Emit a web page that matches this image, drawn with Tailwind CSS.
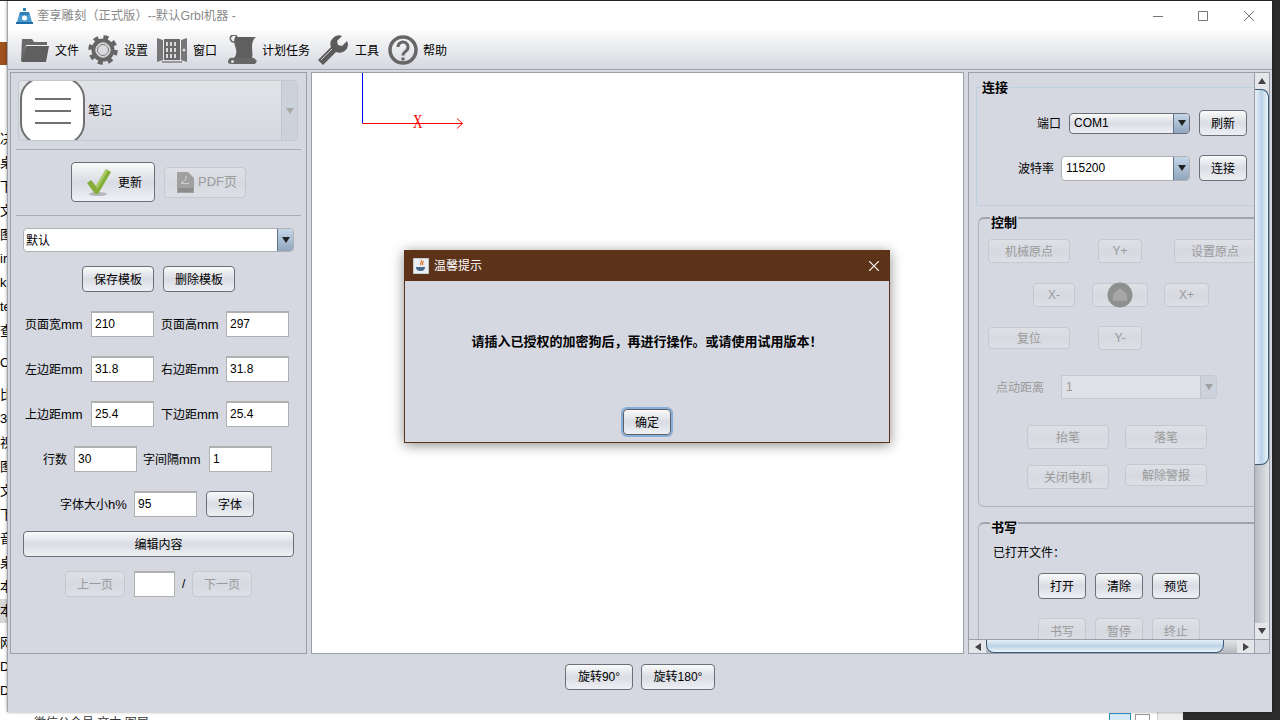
<!DOCTYPE html>
<html lang="zh-CN">
<head>
    <meta charset="UTF-8">
    <title>奎享雕刻</title>
    <script src="https://cdn.jsdelivr.net/npm/@tailwindcss/browser@4"></script>
</head>
<body class="relative w-[1280px] h-[720px] overflow-hidden bg-white text-[12px] leading-[14px] text-black font-['Liberation_Sans','Noto_Sans_CJK_SC',sans-serif]">

    <!-- desktop behind the window -->
    <div class="absolute left-0 top-0 w-[8px] h-[720px] overflow-hidden bg-white text-[13px] leading-[24px] whitespace-nowrap">
        <div class="h-[1px] bg-[#2b2b2b]"></div>
        <div class="h-[41px]"></div>
        <div class="h-[23px] bg-[#a0521e]"></div>
        <div class="h-[62px]"></div>
        <div>决</div><div>桌</div><div>下</div><div>文</div><div>图</div><div>ir</div><div>k</div><div>te</div><div>查</div>
        <div class="h-[8px]"></div>
        <div>Or</div>
        <div class="h-[8px]"></div>
        <div>比</div><div>3</div><div>视</div><div>图</div><div>文</div><div>下</div><div>音</div><div>桌</div><div>本</div>
        <div class="bg-[#d8d8d8]">本</div>
        <div class="h-[8px]"></div>
        <div>网</div><div>D</div><div>D</div>
    </div>
    <div class="absolute left-0 top-0 w-[1280px] h-[1px] bg-[#2b2b2b]"></div>
    <div class="absolute right-0 top-0 w-[8px] h-[720px] bg-[#2b2b2b]"></div>
    <div class="absolute left-0 bottom-0 w-[1280px] h-[8px] flex overflow-hidden">
        <div class="w-[1109px] pl-[34px] pt-[4px] text-[12px] text-[#333] bg-white">微信公众号 文本 图层</div>
        <div class="w-[22px] h-[8px] mt-[1px] border border-b-0 border-[#2f8fc4] bg-[#d6e9f5]"></div>
        <div class="w-[4px] bg-white"></div>
        <div class="w-[15px] h-[8px] mt-[2px] border border-b-0 border-[#999] bg-white"></div>
        <div class="w-[7px] bg-white"></div>
        <div class="w-[26px] bg-[#ededed] border-l border-[#ccc]"></div>
        <div class="flex-1 bg-[#2b2b2b]"></div>
    </div>

    <!-- main window -->
    <div class="absolute left-[7px] top-[1px] w-[1265px] h-[711px] flex flex-col bg-[#d5d8e0] border-l border-[#a0a4ac] shadow-[0_0_3px_rgba(0,0,0,0.4)]">

        <!-- title bar -->
        <div class="h-[30px] flex items-center bg-white">
            <svg class="ml-[8px] w-[17px] h-[18px]" viewBox="0 0 17 18">
                <path d="M7 1h3v3H7z M4 5h9l1 3H3z" fill="#2f7fb8"/>
                <path d="M1 15l2-7h11l2 7z" fill="#4a9ad0"/>
                <circle cx="8.500" cy="11" r="2.500" fill="#fff"/>
                <path d="M0 15h17v2H0z" fill="#1f6ea6"/>
            </svg>
            <span class="ml-[4px] text-[12.3px] text-[#8a8a8a]">奎享雕刻（正式版）--默认Grbl机器 -</span>
            <div class="ml-auto flex items-center">
                <svg class="w-[10px] h-[10px]" viewBox="0 0 10 10"><path d="M0 5.500h10" stroke="#777" stroke-width="1"/></svg>
                <svg class="ml-[35px] w-[10px] h-[10px]" viewBox="0 0 10 10"><path d="M.5.5h9v9h-9z" fill="none" stroke="#777" stroke-width="1"/></svg>
                <svg class="ml-[36px] mr-[18px] w-[10px] h-[10px]" viewBox="0 0 10 10"><path d="M0 0l10 10M10 0L0 10" stroke="#777" stroke-width="1"/></svg>
            </div>
        </div>

        <!-- toolbar -->
        <div class="h-[39px] flex items-center bg-linear-to-b from-[#fbfbfb] to-[#d5d8e0] border-b border-[#a0a4ac]">
            <svg class="ml-[12px] w-[30px] h-[30px]" viewBox="0 0 30 30">
                <path d="M2 4h10l2 3h13v3H6L3 26H1z" fill="#6a6a6a"/>
                <path d="M6 11h23l-3 16H1.500z" fill="#5f5f5f"/>
            </svg>
            <span class="ml-[5px] pt-[2px]">文件</span>

            <svg class="ml-[9px] w-[30px] h-[30px]" viewBox="0 0 30 30">
                <circle cx="15" cy="15" r="12.500" fill="none" stroke="#666" stroke-width="4.500" stroke-dasharray="4.900 4.920"/>
                <circle cx="15" cy="15" r="9.500" fill="none" stroke="#666" stroke-width="4"/>
                <circle cx="15" cy="15" r="7.200" fill="#eceef0" stroke="#bbb" stroke-width="1"/>
                <circle cx="15" cy="15" r="5.500" fill="#d9dbe0" stroke="#777" stroke-width="1"/>
            </svg>
            <span class="ml-[6px] pt-[2px]">设置</span>

            <svg class="ml-[9px] w-[30px] h-[30px]" viewBox="0 0 30 30">
                <path d="M0 3l6 2v20l-6 2z M30 3l-6 2v20l6 2z" fill="#777"/>
                <path d="M7 4h16v21H7z" fill="#6a6a6a"/>
                <path d="M9 7h2v4H9z M13 7h2v4h-2z M17 7h2v4h-2z M9 13h2v4H9z M13 13h2v4h-2z M17 13h2v4h-2z M9 19h2v4H9z M13 19h2v4h-2z M17 19h2v4h-2z" fill="#d8dade"/>
                <circle cx="27" cy="15" r="1.500" fill="#d8dade"/>
                <path d="M5 26h20v2H5z" fill="#999"/>
            </svg>
            <span class="ml-[6px] pt-[2px]">窗口</span>

            <svg class="ml-[10px] w-[30px] h-[30px]" viewBox="0 0 30 30">
                <path d="M8 2h21c-3 2-4 6-4 10s1 7 0 12H6c3-3 4-6 3-10S6 7 8 2z" fill="#5f5f5f"/>
                <path d="M7 7a3.500 3.500 0 1 1 3-5" fill="none" stroke="#666" stroke-width="1.500"/>
                <path d="M1 27c0-3 2-5 6-4h20l3 3-2 3H5c-3 0-4-1-4-2z" fill="#666"/>
                <circle cx="5.500" cy="26.500" r="1.500" fill="#ddd"/>
            </svg>
            <span class="ml-[5px] pt-[2px]">计划任务</span>

            <svg class="ml-[8px] w-[31px] h-[30px]" viewBox="0 0 31 30">
                <path d="M30 9a8.500 8.500 0 0 1-12 8L5 30l-5-5 13-13A8.500 8.500 0 0 1 24 1l-5 5 1 4 4 1 5-5z" fill="#5c5c5c"/>
                <path d="M3 25l11-11" stroke="#ccc" stroke-width="1"/>
            </svg>
            <span class="ml-[6px] pt-[2px]">工具</span>

            <svg class="ml-[9px] w-[30px] h-[30px]" viewBox="0 0 30 30">
                <circle cx="15" cy="15" r="13" fill="none" stroke="#666" stroke-width="3.500"/>
                <path d="M10 12a5 5 0 1 1 8 4c-2 1.500-3 2-3 4.500" fill="none" stroke="#666" stroke-width="3"/>
                <circle cx="15" cy="24" r="1.800" fill="#666"/>
            </svg>
            <span class="ml-[5px] pt-[2px]">帮助</span>
        </div>

        <!-- panels -->
        <div class="h-[584px] flex pt-[2px] pl-[2px] gap-[4px]">

            <!-- left panel -->
            <div class="w-[297px] border border-[#9a9ea6] pt-[7px]">
                <div class="ml-[7px] w-[280px] h-[61px] flex items-center rounded-[4px] border border-[#c4c8cf] bg-linear-to-b from-[#e2e3e7] to-[#d5d8e0] overflow-hidden">
                    <div class="ml-[1px] shrink-0 w-[65px] h-[68px] flex flex-col items-center justify-center gap-[10px] rounded-[22px] bg-white border-2 border-[#707070]">
                        <div class="w-[36px] h-[2px] bg-[#707070]"></div>
                        <div class="w-[36px] h-[2px] bg-[#707070]"></div>
                        <div class="w-[36px] h-[2px] bg-[#707070]"></div>
                    </div>
                    <span class="ml-[3px]">笔记</span>
                    <div class="ml-auto w-[16px] h-[61px] flex items-center justify-center border-l border-[#c0c4cc] bg-[#ccd2dc]">
                        <div class="border-x-[4px] border-x-transparent border-t-[6px] border-t-[#a8a8a8]"></div>
                    </div>
                </div>
                <div class="ml-[5px] mt-[8px] w-[285px] h-[1px] bg-[#a8acb4]"></div>

                <div class="mt-[12px] h-[40px] flex items-center">
                    <div class="ml-[60px] w-[84px] h-[40px] flex items-center rounded-[4px] border border-[#6b7078] bg-linear-to-b from-[#fafafa] via-[#d9dce3] to-[#eef0f4]">
                        <svg class="ml-[14px] w-[26px] h-[30px]" viewBox="0 0 26 30">
                            <ellipse cx="12" cy="27" rx="9" ry="2" fill="#b5b7bc"/>
                            <path d="M1 16l4-3 5 6L20 2l5 3-13 22h-3z" fill="#84ad3c"/>
                            <path d="M10 19L20 2l2 1.500L11 22z" fill="#a9cc62"/>
                        </svg>
                        <span class="ml-[6px] pt-[2px]">更新</span>
                    </div>
                    <div class="ml-[9px] w-[82px] h-[31px] flex items-center rounded-[4px] border border-[#c4c8cf] bg-linear-to-b from-[#dfe1e6] via-[#d6d9e0] to-[#dcdfe5] text-[#9a9a9a]">
                        <svg class="ml-[12px] w-[17px] h-[21px]" viewBox="0 0 17 21">
                            <path d="M0 0h11l6 6v15H0z" fill="#a0a0a0"/>
                            <path d="M4 11c3-1 6-4 5-7M4 11c3 1 6 1 8 0" fill="none" stroke="#d8dade" stroke-width="1"/>
                            <path d="M1 16h15v4H1z" fill="#8c8c8c"/>
                        </svg>
                        <span class="ml-[4px] text-[13px]">PDF页</span>
                    </div>
                </div>
                <div class="ml-[5px] mt-[13px] w-[285px] h-[1px] bg-[#a8acb4]"></div>

                <div class="ml-[12px] mt-[12px] w-[271px] h-[24px] flex items-center rounded-[4px] border border-[#b0b0b0] bg-white overflow-hidden">
                    <span class="ml-[2px] pt-[2px]">默认</span>
                    <div class="ml-auto w-[16px] h-[24px] flex items-center justify-center bg-linear-to-b from-[#c8d8ea] to-[#8ea4bc] border-l border-[#5d738c]">
                        <div class="border-x-[4px] border-x-transparent border-t-[6px] border-t-[#222]"></div>
                    </div>
                </div>

                <div class="mt-[14px] flex">
                    <div class="ml-[71px] w-[72px] h-[26px] pt-[2px] flex items-center justify-center rounded-[4px] border border-[#6b7078] bg-linear-to-b from-[#fafafa] via-[#d9dce3] to-[#eef0f4]">保存模板</div>
                    <div class="ml-[9px] w-[72px] h-[26px] pt-[2px] flex items-center justify-center rounded-[4px] border border-[#6b7078] bg-linear-to-b from-[#fafafa] via-[#d9dce3] to-[#eef0f4]">删除模板</div>
                </div>

                <div class="mt-[19px] h-[26px] flex items-center">
                    <span class="ml-[14px] w-[66px] pt-[2px]">页面宽<span class="text-[13px]">mm</span></span>
                    <div class="w-[63px] h-[26px] flex items-center pl-[3px] pb-[2px] bg-white border border-[#b0b0b0] border-t-2">210</div>
                    <span class="ml-[7px] w-[65px] pt-[2px]">页面高<span class="text-[13px]">mm</span></span>
                    <div class="w-[63px] h-[26px] flex items-center pl-[3px] pb-[2px] bg-white border border-[#b0b0b0] border-t-2">297</div>
                </div>
                <div class="mt-[19px] h-[26px] flex items-center">
                    <span class="ml-[14px] w-[66px] pt-[2px]">左边距<span class="text-[13px]">mm</span></span>
                    <div class="w-[63px] h-[26px] flex items-center pl-[3px] pb-[2px] bg-white border border-[#b0b0b0] border-t-2">31.8</div>
                    <span class="ml-[7px] w-[65px] pt-[2px]">右边距<span class="text-[13px]">mm</span></span>
                    <div class="w-[63px] h-[26px] flex items-center pl-[3px] pb-[2px] bg-white border border-[#b0b0b0] border-t-2">31.8</div>
                </div>
                <div class="mt-[19px] h-[26px] flex items-center">
                    <span class="ml-[14px] w-[66px] pt-[2px]">上边距<span class="text-[13px]">mm</span></span>
                    <div class="w-[63px] h-[26px] flex items-center pl-[3px] pb-[2px] bg-white border border-[#b0b0b0] border-t-2">25.4</div>
                    <span class="ml-[7px] w-[65px] pt-[2px]">下边距<span class="text-[13px]">mm</span></span>
                    <div class="w-[63px] h-[26px] flex items-center pl-[3px] pb-[2px] bg-white border border-[#b0b0b0] border-t-2">25.4</div>
                </div>
                <div class="mt-[19px] h-[26px] flex items-center">
                    <span class="ml-[32px] w-[31px] pt-[2px]">行数</span>
                    <div class="w-[63px] h-[26px] flex items-center pl-[3px] pb-[2px] bg-white border border-[#b0b0b0] border-t-2">30</div>
                    <span class="ml-[6px] w-[66px] pt-[2px]">字间隔<span class="text-[13px]">mm</span></span>
                    <div class="w-[63px] h-[26px] flex items-center pl-[3px] pb-[2px] bg-white border border-[#b0b0b0] border-t-2">1</div>
                </div>
                <div class="mt-[19px] h-[26px] flex items-center">
                    <span class="ml-[49px] w-[74px] pt-[2px]">字体大小<span class="text-[13px]">h%</span></span>
                    <div class="w-[63px] h-[26px] flex items-center pl-[3px] pb-[2px] bg-white border border-[#b0b0b0] border-t-2">95</div>
                    <div class="ml-[9px] w-[48px] h-[26px] pt-[2px] flex items-center justify-center rounded-[4px] border border-[#6b7078] bg-linear-to-b from-[#fafafa] via-[#d9dce3] to-[#eef0f4]">字体</div>
                </div>

                <div class="ml-[12px] mt-[14px] w-[271px] h-[26px] pt-[2px] flex items-center justify-center rounded-[4px] border border-[#6b7078] bg-linear-to-b from-[#fafafa] via-[#d9dce3] to-[#eef0f4]">编辑内容</div>

                <div class="mt-[14px] h-[26px] flex items-center">
                    <div class="ml-[54px] w-[60px] h-[26px] pt-[2px] flex items-center justify-center rounded-[4px] border border-[#c4c8cf] bg-linear-to-b from-[#dfe1e6] via-[#d6d9e0] to-[#dcdfe5] text-[#9a9a9a]">上一页</div>
                    <div class="ml-[9px] w-[41px] h-[26px] bg-white border border-[#b0b0b0] border-t-2"></div>
                    <span class="ml-[7px] w-[10px]">/</span>
                    <div class="w-[60px] h-[26px] pt-[2px] flex items-center justify-center rounded-[4px] border border-[#c4c8cf] bg-linear-to-b from-[#dfe1e6] via-[#d6d9e0] to-[#dcdfe5] text-[#9a9a9a]">下一页</div>
                </div>
            </div>

            <!-- canvas -->
            <div class="w-[653px] border border-[#9a9ea6] bg-white">
                <svg class="w-[651px] h-[580px]" viewBox="0 0 651 580">
                    <path d="M50.500 0v50.500" stroke="#0000ff" stroke-width="1" fill="none"/>
                    <path d="M50.500 50.500h100" stroke="#ff0000" stroke-width="1" fill="none"/>
                    <path d="M145 45.500l5.500 5-5.500 5" stroke="#ff0000" stroke-width="1" fill="none"/>
                    <text x="101" y="55" fill="#ff0000" font-size="19" textLength="9.500" lengthAdjust="spacingAndGlyphs" font-family="Liberation Serif, serif">X</text>
                </svg>
            </div>

            <!-- right panel -->
            <div class="w-[302px] border border-[#9a9ea6] flex flex-col">
                <div class="h-[566px] flex">
                    <div class="w-[285px] h-[566px] overflow-hidden">

                        <!-- 连接 -->
                        <div class="relative ml-[7px] mt-[14px] w-[300px] h-[119px] border border-[#bcd0e2]">
                            <span class="absolute left-[4px] -top-[7px] px-[1px] bg-[#d5d8e0] text-[13px] font-bold">连接</span>
                            <div class="mt-[22px] h-[26px] flex items-center">
                                <span class="ml-[60px] w-[32px] pt-[2px]">端口</span>
                                <div class="w-[121px] h-[21px] flex items-center rounded-[4px] border border-[#6b7078] bg-linear-to-b from-[#fafafa] via-[#d9dce3] to-[#eef0f4] overflow-hidden">
                                    <span class="ml-[4px] pb-[1px]">COM1</span>
                                    <div class="ml-auto w-[16px] h-[21px] flex items-center justify-center bg-linear-to-b from-[#c8d8ea] to-[#8ea4bc] border-l border-[#5d738c]">
                                        <div class="border-x-[4px] border-x-transparent border-t-[6px] border-t-[#222]"></div>
                                    </div>
                                </div>
                                <div class="ml-[9px] w-[48px] h-[26px] pt-[2px] flex items-center justify-center rounded-[4px] border border-[#6b7078] bg-linear-to-b from-[#fafafa] via-[#d9dce3] to-[#eef0f4]">刷新</div>
                            </div>
                            <div class="mt-[19px] h-[26px] flex items-center">
                                <span class="ml-[41px] w-[43px] pt-[2px]">波特率</span>
                                <div class="w-[129px] h-[25px] flex items-center rounded-[4px] border border-[#b0b0b0] bg-white overflow-hidden">
                                    <span class="ml-[4px]">115200</span>
                                    <div class="ml-auto w-[16px] h-[25px] flex items-center justify-center bg-linear-to-b from-[#c8d8ea] to-[#8ea4bc] border-l border-[#5d738c]">
                                        <div class="border-x-[4px] border-x-transparent border-t-[6px] border-t-[#222]"></div>
                                    </div>
                                </div>
                                <div class="ml-[9px] w-[48px] h-[26px] pt-[2px] flex items-center justify-center rounded-[4px] border border-[#6b7078] bg-linear-to-b from-[#fafafa] via-[#d9dce3] to-[#eef0f4]">连接</div>
                            </div>
                        </div>

                        <!-- 控制 -->
                        <div class="relative ml-[9px] mt-[11px] w-[300px] h-[290px] rounded-l-[6px] border border-[#b0b4bc] border-t-2 border-t-[#a0a4ac]">
                            <span class="absolute left-[11px] -top-[3px] px-[1px] bg-[#d5d8e0] text-[13px] font-bold">控制</span>
                            <div class="mt-[20px] flex text-[#9a9a9a]">
                                <div class="ml-[9px] w-[82px] h-[24px] pt-[2px] flex items-center justify-center rounded-[4px] border border-[#c4c8cf] bg-linear-to-b from-[#dfe1e6] via-[#d6d9e0] to-[#dcdfe5]">机械原点</div>
                                <div class="ml-[28px] w-[44px] h-[24px] flex items-center justify-center rounded-[4px] border border-[#c4c8cf] bg-linear-to-b from-[#dfe1e6] via-[#d6d9e0] to-[#dcdfe5]">Y+</div>
                                <div class="ml-[32px] w-[82px] h-[24px] pt-[2px] flex items-center justify-center rounded-[4px] border border-[#c4c8cf] bg-linear-to-b from-[#dfe1e6] via-[#d6d9e0] to-[#dcdfe5]">设置原点</div>
                            </div>
                            <div class="mt-[20px] flex text-[#9a9a9a]">
                                <div class="ml-[54px] w-[42px] h-[24px] flex items-center justify-center rounded-[4px] border border-[#c4c8cf] bg-linear-to-b from-[#dfe1e6] via-[#d6d9e0] to-[#dcdfe5]">X-</div>
                                <div class="ml-[17px] w-[56px] h-[24px] flex items-center justify-center rounded-[4px] border border-[#c4c8cf] bg-linear-to-b from-[#dfe1e6] via-[#d6d9e0] to-[#dcdfe5]">
                                    <svg class="w-[26px] h-[26px]" viewBox="0 0 26 26">
                                        <circle cx="13" cy="13" r="12.500" fill="#8f8f8f"/>
                                        <path d="M13 6l7 6v7H6v-7z" fill="#a6a6a6"/>
                                    </svg>
                                </div>
                                <div class="ml-[16px] w-[45px] h-[24px] flex items-center justify-center rounded-[4px] border border-[#c4c8cf] bg-linear-to-b from-[#dfe1e6] via-[#d6d9e0] to-[#dcdfe5]">X+</div>
                            </div>
                            <div class="mt-[19px] h-[24px] flex items-center text-[#9a9a9a]">
                                <div class="ml-[9px] w-[82px] h-[22px] pt-[2px] flex items-center justify-center rounded-[4px] border border-[#c4c8cf] bg-linear-to-b from-[#dfe1e6] via-[#d6d9e0] to-[#dcdfe5]">复位</div>
                                <div class="ml-[28px] w-[44px] h-[24px] flex items-center justify-center rounded-[4px] border border-[#c4c8cf] bg-linear-to-b from-[#dfe1e6] via-[#d6d9e0] to-[#dcdfe5]">Y-</div>
                            </div>
                            <div class="mt-[25px] h-[24px] flex items-center text-[#9a9a9a]">
                                <span class="ml-[17px] w-[65px] pt-[2px]">点动距离</span>
                                <div class="w-[156px] h-[24px] flex items-center rounded-r-[4px] border border-[#c4c8cf] bg-[#dfe1e6] overflow-hidden">
                                    <span class="ml-[4px]">1</span>
                                    <div class="ml-auto w-[16px] h-[24px] flex items-center justify-center bg-[#ccd2dc] border-l border-[#c0c4cc]">
                                        <div class="border-x-[4px] border-x-transparent border-t-[6px] border-t-[#a0a0a0]"></div>
                                    </div>
                                </div>
                            </div>
                            <div class="mt-[26px] flex text-[#9a9a9a]">
                                <div class="ml-[48px] w-[82px] h-[24px] pt-[2px] flex items-center justify-center rounded-[4px] border border-[#c4c8cf] bg-linear-to-b from-[#dfe1e6] via-[#d6d9e0] to-[#dcdfe5]">抬笔</div>
                                <div class="ml-[16px] w-[82px] h-[24px] pt-[2px] flex items-center justify-center rounded-[4px] border border-[#c4c8cf] bg-linear-to-b from-[#dfe1e6] via-[#d6d9e0] to-[#dcdfe5]">落笔</div>
                            </div>
                            <div class="mt-[15px] flex items-start text-[#9a9a9a]">
                                <div class="ml-[48px] mt-[1px] w-[82px] h-[24px] pt-[2px] flex items-center justify-center rounded-[4px] border border-[#c4c8cf] bg-linear-to-b from-[#dfe1e6] via-[#d6d9e0] to-[#dcdfe5]">关闭电机</div>
                                <div class="ml-[16px] w-[82px] h-[22px] pt-[2px] flex items-center justify-center rounded-[4px] border border-[#c4c8cf] bg-linear-to-b from-[#dfe1e6] via-[#d6d9e0] to-[#dcdfe5]">解除警报</div>
                            </div>
                        </div>

                        <!-- 书写 -->
                        <div class="relative ml-[9px] mt-[15px] w-[300px] h-[200px] rounded-tl-[6px] border border-[#b0b4bc] border-t-2 border-t-[#a0a4ac]">
                            <span class="absolute left-[11px] -top-[3px] px-[1px] bg-[#d5d8e0] text-[13px] font-bold">书写</span>
                            <div class="ml-[14px] mt-[22px]">已打开文件：</div>
                            <div class="mt-[13px] flex gap-[9px] pl-[59px]">
                                <div class="w-[48px] h-[26px] pt-[2px] flex items-center justify-center rounded-[4px] border border-[#6b7078] bg-linear-to-b from-[#fafafa] via-[#d9dce3] to-[#eef0f4]">打开</div>
                                <div class="w-[48px] h-[26px] pt-[2px] flex items-center justify-center rounded-[4px] border border-[#6b7078] bg-linear-to-b from-[#fafafa] via-[#d9dce3] to-[#eef0f4]">清除</div>
                                <div class="w-[48px] h-[26px] pt-[2px] flex items-center justify-center rounded-[4px] border border-[#6b7078] bg-linear-to-b from-[#fafafa] via-[#d9dce3] to-[#eef0f4]">预览</div>
                            </div>
                            <div class="mt-[19px] flex gap-[9px] pl-[59px] text-[#9a9a9a]">
                                <div class="w-[48px] h-[26px] pt-[2px] flex items-center justify-center rounded-[4px] border border-[#c4c8cf] bg-linear-to-b from-[#dfe1e6] via-[#d6d9e0] to-[#dcdfe5]">书写</div>
                                <div class="w-[48px] h-[26px] pt-[2px] flex items-center justify-center rounded-[4px] border border-[#c4c8cf] bg-linear-to-b from-[#dfe1e6] via-[#d6d9e0] to-[#dcdfe5]">暂停</div>
                                <div class="w-[48px] h-[26px] pt-[2px] flex items-center justify-center rounded-[4px] border border-[#c4c8cf] bg-linear-to-b from-[#dfe1e6] via-[#d6d9e0] to-[#dcdfe5]">终止</div>
                            </div>
                        </div>
                    </div>

                    <!-- vertical scrollbar -->
                    <div class="w-[15px] h-[566px] flex flex-col border-l border-[#9a9ea6] bg-linear-to-r from-[#b8bac0] to-[#e2e3e7]">
                        <div class="h-[16px] flex items-center justify-center bg-[#e4e6ea]">
                            <div class="border-x-[4px] border-x-transparent border-b-[6px] border-b-[#444]"></div>
                        </div>
                        <div class="h-[376px] rounded-r-[8px] border border-l-0 border-[#3a5a78] bg-linear-to-r from-[#e8f0f6] via-[#b9d2e8] to-[#eef4f8]"></div>
                        <div class="flex-1"></div>
                        <div class="h-[16px] flex items-center justify-center bg-[#e4e6ea]">
                            <div class="border-x-[4px] border-x-transparent border-t-[6px] border-t-[#444]"></div>
                        </div>
                    </div>
                </div>

                <!-- horizontal scrollbar -->
                <div class="h-[15px] flex border-t border-[#9a9ea6] bg-linear-to-b from-[#e2e3e7] to-[#b8bac0]">
                    <div class="w-[17px] flex items-center justify-center bg-[#e4e6ea]">
                        <div class="border-y-[4px] border-y-transparent border-r-[6px] border-r-[#444]"></div>
                    </div>
                    <div class="w-[238px] rounded-b-[8px] border border-t-0 border-[#3a5a78] bg-linear-to-b from-[#e8f0f6] via-[#b9d2e8] to-[#eef4f8]"></div>
                    <div class="flex-1"></div>
                    <div class="w-[17px] flex items-center justify-center bg-[#e4e6ea]">
                        <div class="border-y-[4px] border-y-transparent border-l-[6px] border-l-[#444]"></div>
                    </div>
                    <div class="w-[15px] bg-[#d5d8e0] border-l border-[#9a9ea6]"></div>
                </div>
            </div>
        </div>

        <!-- rotate buttons -->
        <div class="flex-1 flex justify-center gap-[8px] pt-[10px]">
            <div class="w-[68px] h-[26px] flex items-center justify-center rounded-[4px] border border-[#6b7078] bg-linear-to-b from-[#fafafa] via-[#d9dce3] to-[#eef0f4]">旋转90°</div>
            <div class="w-[74px] h-[26px] flex items-center justify-center rounded-[4px] border border-[#6b7078] bg-linear-to-b from-[#fafafa] via-[#d9dce3] to-[#eef0f4]">旋转180°</div>
        </div>
    </div>

    <!-- dialog -->
    <div class="absolute left-[404px] top-[250px] w-[486px] h-[193px] flex flex-col border border-[#5c3218] bg-[#d5d8e0] shadow-[0_2px_12px_rgba(0,0,0,0.45)]">
        <div class="h-[30px] flex items-center bg-[#5c3218] text-white">
            <svg class="ml-[8px] w-[16px] h-[16px]" viewBox="0 0 16 16">
                <rect width="16" height="16" fill="#eceff4" stroke="#9aa" stroke-width="1"/>
                <path d="M8 2c2 2-2 3 0 5M10 3c1 2-2 2 0 4" stroke="#e07020" stroke-width="1.200" fill="none"/>
                <path d="M3 9h9c0 3-2 4-4.500 4S3 12 3 9z" fill="#4a6a8a"/>
            </svg>
            <span class="ml-[5px]">温馨提示</span>
            <svg class="ml-auto mr-[10px] w-[10px] h-[10px]" viewBox="0 0 10 10"><path d="M0 0l10 10M10 0L0 10" stroke="#fff" stroke-width="1.200"/></svg>
        </div>
        <div class="mt-[53px] text-center text-[13px] leading-[16px] font-bold">请插入已授权的加密狗后，再进行操作。或请使用试用版本！</div>
        <div class="mt-[59px] flex justify-center">
            <div class="w-[48px] h-[26px] pt-[2px] flex items-center justify-center rounded-[4px] border border-[#5c5f66] ring-2 ring-[#86aedb] bg-linear-to-b from-[#fafafa] via-[#d9dce3] to-[#eef0f4]">确定</div>
        </div>
    </div>
</body>
</html>
